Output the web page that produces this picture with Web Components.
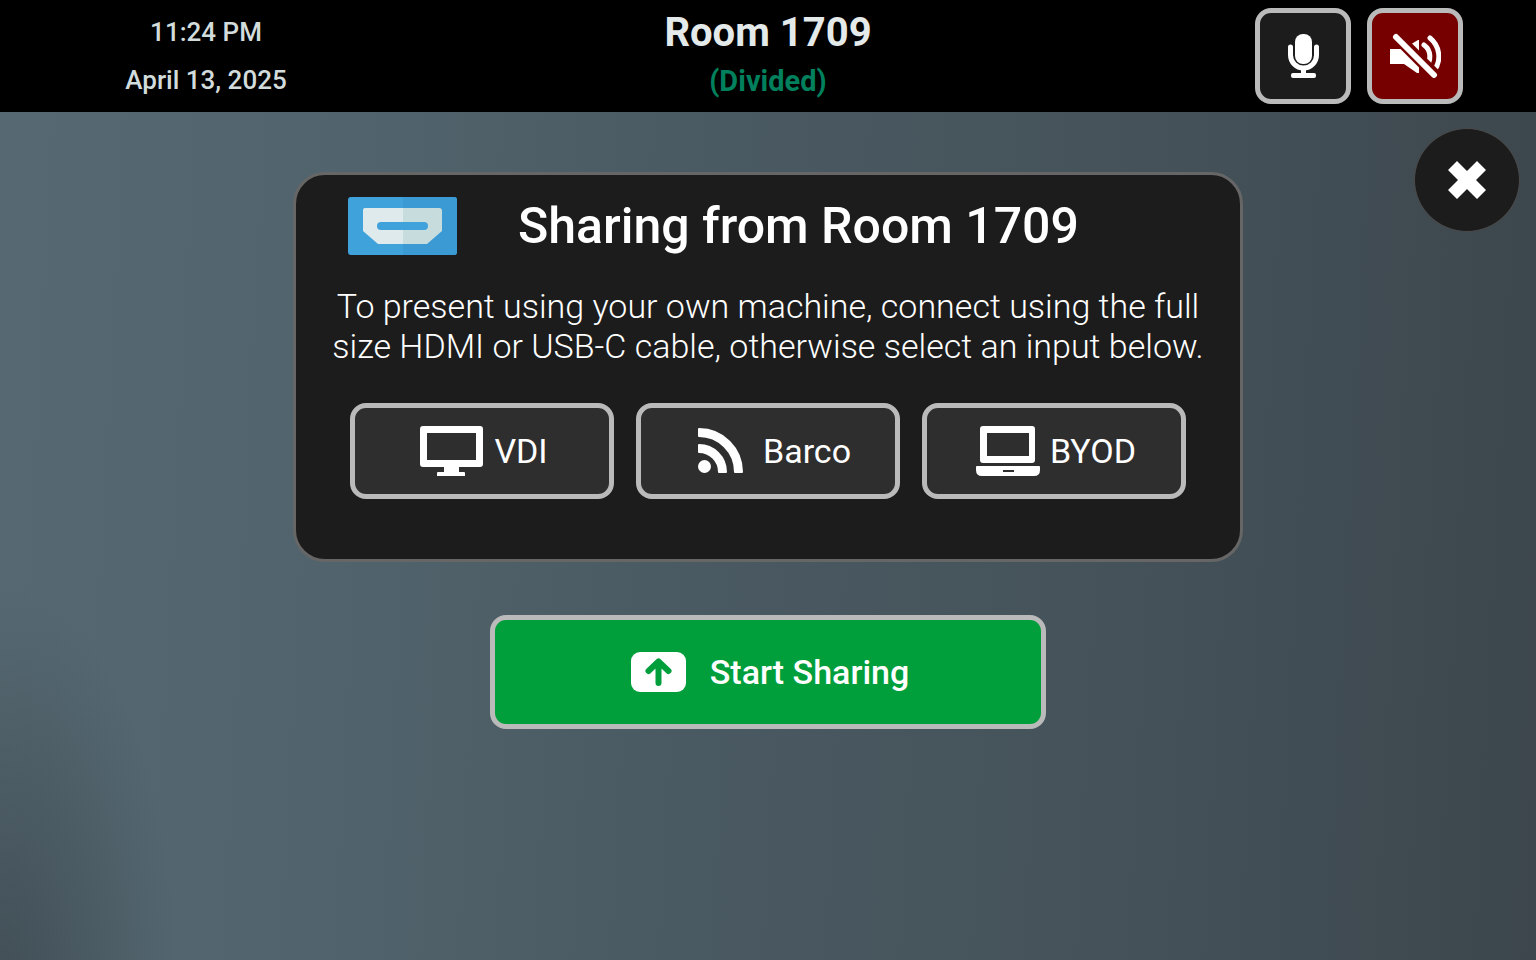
<!DOCTYPE html>
<html lang="en">
<head>
<meta charset="utf-8">
<title>Room 1709</title>
<style>
  body {
    margin: 0;
    min-height: 100vh;
    display: flex;
    font-family: Roboto, "Liberation Sans", sans-serif;
    color: #fff;
    background: #49565e;
  }
  room-panel {
    flex: 1;
  }
</style>
</head>
<body>
<room-panel></room-panel>

<script>
const ICONS = {
  mic: `<svg width="33" height="46" viewBox="0 0 33 46" fill="#fff" aria-hidden="true">
    <rect x="8" y="1" width="17" height="30" rx="8"/>
    <path d="M3.5 14v8a13 13 0 0 0 26 0v-8" fill="none" stroke="#fff" stroke-width="5" stroke-linecap="round"/>
    <path d="M14 35h5v6h-5z"/>
    <rect x="4" y="40" width="25" height="5" rx="2"/>
  </svg>`,
  mute: `<svg width="52" height="46" viewBox="0 0 52 46" fill="none" stroke="#fff" aria-hidden="true">
    <path d="M1 16h13L29 7h1v33h-2L15 31H1z" fill="#fff" stroke="none"/>
    <path d="M35 12a14 14 0 0 1 1 22" stroke-width="5" stroke-linecap="round"/>
    <path d="M41 5a24 24 0 0 1 4 33" stroke-width="5" stroke-linecap="round"/>
    <path d="M3 -1L50 46" stroke="#760000" stroke-width="12"/>
    <path d="M7 4L45 42" stroke-width="6" stroke-linecap="round"/>
  </svg>`,
  close: `<svg width="38" height="38" viewBox="0 0 38 38" fill="#fff" aria-hidden="true">
    <path d="M9 0l10 10L29 0l9 9-10 10 10 10-9 9-10-10L9 38l-9-9 10-10L0 9z"/>
  </svg>`,
  hdmi: `<svg width="109" height="58" viewBox="0 0 109 58" aria-hidden="true">
    <rect width="109" height="58" rx="3" fill="#3fa2db"/>
    <path d="M55 0h51a3 3 0 0 1 3 3v52a3 3 0 0 1-3 3H55z" fill="#3b99d3"/>
    <path d="M17 11h38v36H30L15 34V13a2 2 0 0 1 2-2z" fill="#dfeaed"/>
    <path d="M55 11h36a3 3 0 0 1 3 3v20L79 47H55z" fill="#c6dcdd"/>
    <rect x="29" y="25" width="51" height="8" rx="4" fill="#3fa2db"/>
  </svg>`,
  monitor: `<svg width="64" height="50" viewBox="0 0 64 50" fill="#fff" aria-hidden="true">
    <path fill-rule="evenodd" d="M3 0h57a3 3 0 0 1 3 3v35a3 3 0 0 1-3 3H3a3 3 0 0 1-3-3V3a3 3 0 0 1 3-3zM7 7v27h49V7z"/>
    <path d="M24 41h15v5h5a1 1 0 0 1 1 1v3H17v-3a1 1 0 0 1 1-1h6z"/>
  </svg>`,
  feed: `<svg width="64" height="50" viewBox="-9 -2 64 50" fill="#fff" stroke="#fff" stroke-width="2" stroke-linejoin="round" aria-hidden="true">
    <circle cx="6.5" cy="38.5" r="5.5"/>
    <path d="M1 17A27 27 0 0 1 28 44H21A20 20 0 0 0 1 24z"/>
    <path d="M1 1A43 43 0 0 1 44 44H37A36 36 0 0 0 1 8z"/>
  </svg>`,
  laptop: `<svg width="64" height="50" viewBox="0 0 64 50" fill="#fff" fill-rule="evenodd" aria-hidden="true">
    <path d="M7 0h49a3 3 0 0 1 3 3v31a3 3 0 0 1-3 3H7a3 3 0 0 1-3-3V3a3 3 0 0 1 3-3zM11 7v23h42V7z"/>
    <path d="M1 40h62a1 1 0 0 1 1 1v3q0 6-6 6H6q-6 0-6-6v-3a1 1 0 0 1 1-1zM27 44v2h11v-2z"/>
  </svg>`,
  share: `<svg width="55" height="40" viewBox="0 0 55 40" aria-hidden="true">
    <rect width="55" height="40" rx="9" fill="#fff"/>
    <path d="M27.5 31V10M17.5 19l10-9.5 10 9.5" fill="none" stroke="#009f3c" stroke-width="6" stroke-linecap="round" stroke-linejoin="round"/>
  </svg>`
}

// bordered touch button; look is set by the "kind" attribute
class PanelButton extends HTMLElement {
  constructor() {
    super();
    this.attachShadow({mode: 'open'})
  }
  connectedCallback() {
    const label = this.getAttribute('label')
    this.shadowRoot.innerHTML = `
    <style>
      :host { display: block; }
      button {
        box-sizing: border-box;
        display: flex;
        align-items: center;
        justify-content: center;
        gap: 10px;
        width: 100%;
        height: 96px;
        margin: 0;
        padding: 0;
        border: 5px solid #bababa;
        border-radius: 16px;
        background: #2e2e2e;
        color: #fff;
        font: 400 34px/40px Roboto, "Liberation Sans", sans-serif;
        cursor: pointer;
      }
      svg { display: block; flex: none; }
      :host([kind="input"]) button { padding-left: 4px; }
      :host([kind="square"]) { width: 96px; }
      :host([kind="square"]) button { background: #1c1c1c; }
      :host([kind="muted"]) { width: 96px; }
      :host([kind="muted"]) button { background: #760000; }
      :host([kind="go"]) button {
        height: 114px;
        gap: 24px;
        padding-left: 4px;
        background: #009f3c;
        font-weight: 500;
      }
      :host([kind="round"]) { width: 106px; }
      :host([kind="round"]) button {
        height: 104px;
        border: 1px solid #4a4a4a;
        border-radius: 50%;
        background: #1c1c1c;
      }
    </style>
    <button type="button" ${label ? `aria-label="${label}"` : ''}>${ICONS[this.getAttribute('icon')]}<slot></slot></button>
    `
  }
}
customElements.define('panel-button', PanelButton)

class StatusBar extends HTMLElement {
  constructor() {
    super();
    this.attachShadow({mode: 'open'}).innerHTML = `
    <style>
      :host {
        display: grid;
        grid-template-columns: 412px 1fr 412px;
        align-items: center;
        height: 112px;
        background: #000;
        text-align: center;
      }
      .clock {
        font-size: 26px;
        line-height: 48px;
        font-weight: 500;
        color: #d3dcdc;
      }
      h1 {
        margin: 0;
        font-size: 40px;
        line-height: 50px;
        font-weight: 700;
        color: #e4e9e9;
      }
      .mode {
        font-size: 29px;
        line-height: 46px;
        font-weight: 700;
        color: #00805c;
      }
      .controls {
        display: flex;
        justify-content: flex-end;
        gap: 16px;
        padding-right: 73px;
      }
    </style>
    <div class="clock"><div><slot name="time"></slot></div><div><slot name="date"></slot></div></div>
    <div><h1><slot name="room"></slot></h1><div class="mode"><slot name="mode"></slot></div></div>
    <div class="controls"><slot></slot></div>
    `
  }
}
customElements.define('status-bar', StatusBar)

class ShareCard extends HTMLElement {
  constructor() {
    super();
    this.attachShadow({mode: 'open'}).innerHTML = `
    <style>
      :host {
        box-sizing: border-box;
        display: block;
        width: 100%;
        max-width: 950px;
        padding: 16px 0 60px;
        border: 3px solid #666;
        border-radius: 32px;
        background: #1c1c1c;
      }
      header {
        display: flex;
        align-items: center;
        gap: 61px;
        padding: 0 52px;
      }
      svg { display: block; flex: none; }
      h2 {
        margin: 0;
        font-size: 50px;
        line-height: 70px;
        font-weight: 500;
        white-space: nowrap;
      }
      p {
        margin: 25px 32px 37px;
        font-size: 34px;
        line-height: 40px;
        font-weight: 300;
        text-align: center;
      }
      .inputs {
        display: grid;
        grid-template-columns: repeat(3, 1fr);
        gap: 22px;
        padding: 0 54px;
      }
    </style>
    <header>${ICONS.hdmi}<h2><slot name="title"></slot></h2></header>
    <p><slot name="hint"></slot></p>
    <div class="inputs"><slot></slot></div>
    `
  }
}
customElements.define('share-card', ShareCard)

class RoomPanel extends HTMLElement {
  constructor() {
    super();
    this.attachShadow({mode: 'open'}).innerHTML = `
    <style>
      :host {
        display: flex;
        flex-direction: column;
      }
      main {
        position: relative;
        flex: 1;
        display: flex;
        flex-direction: column;
        align-items: center;
        gap: 53px;
        padding: 60px 24px;
        background:
          radial-gradient(ellipse 180px 420px at 0% 105%, rgba(56, 66, 74, .7), transparent),
          linear-gradient(93deg, #566972 0%, #52656e 18%, #4b5b63 42%, #445159 75%, #3c464c 100%);
      }
      .close {
        position: absolute;
        top: 16px;
        right: 16px;
      }
      .start {
        width: 100%;
        max-width: 556px;
      }
    </style>
    <status-bar>
      <span slot="time">11:24 PM</span>
      <span slot="date">April 13, 2025</span>
      <span slot="room">Room 1709</span>
      <span slot="mode">(Divided)</span>
      <panel-button kind="square" icon="mic" label="Microphone"></panel-button>
      <panel-button kind="muted" icon="mute" label="Unmute"></panel-button>
    </status-bar>
    <main>
      <share-card>
        <span slot="title">Sharing from Room 1709</span>
        <span slot="hint">To present using your own machine, connect using the full size HDMI or USB-C cable, otherwise select an input below.</span>
        <panel-button kind="input" icon="monitor">VDI</panel-button>
        <panel-button kind="input" icon="feed">Barco</panel-button>
        <panel-button kind="input" icon="laptop">BYOD</panel-button>
      </share-card>
      <panel-button class="start" kind="go" icon="share">Start Sharing</panel-button>
      <panel-button class="close" kind="round" icon="close" label="Close"></panel-button>
    </main>
    `
  }
}
customElements.define('room-panel', RoomPanel)
</script>
</body>
</html>
